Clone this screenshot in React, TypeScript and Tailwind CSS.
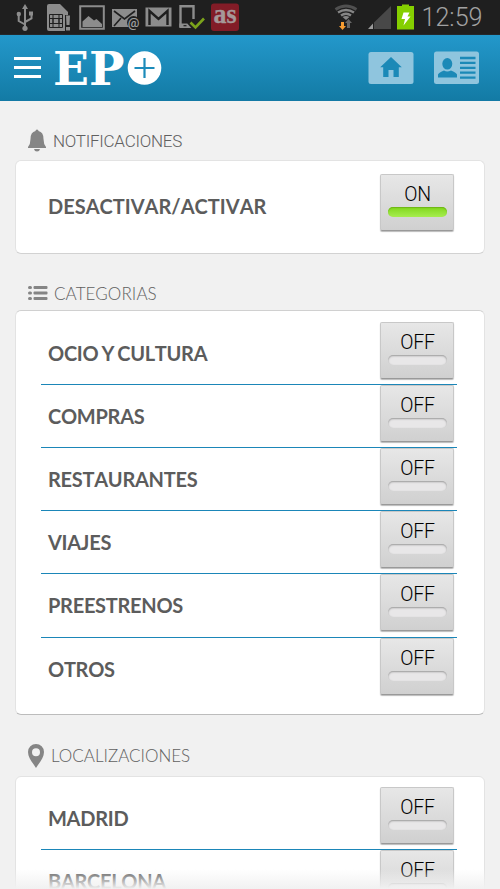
import { useState } from 'react'

const CATEGORIES = ['OCIO Y CULTURA', 'COMPRAS', 'RESTAURANTES', 'VIAJES', 'PREESTRENOS', 'OTROS']
const LOCATIONS = ['MADRID', 'BARCELONA']

function StatusBar() {
  return (
    <div className="flex h-[35px] shrink-0 items-start border-b border-[#24282b] bg-[#1f1f1f] pl-[16px] pr-[17px] text-[#8c8c8c]">
      {/* USB */}
      <svg width="18" height="34" viewBox="16 0 18 34" fill="none" stroke="currentColor" strokeWidth="2">
        <path d="M25 8v20M25 24.500l-6.300-3.500v-6M25 22l6.500-3.500v-4" />
        <path d="M25 4l3 5h-6z" fill="currentColor" stroke="none" />
        <circle cx="25" cy="28.300" r="2.600" fill="currentColor" stroke="none" />
        <circle cx="18.800" cy="14" r="2.200" fill="currentColor" stroke="none" />
        <path d="M29 11.500h4v4h-4z" fill="currentColor" stroke="none" />
      </svg>
      {/* SIM card */}
      <svg className="ml-[12px]" width="25" height="34" viewBox="46 0 25 34" fill="currentColor">
        <path d="M49 4h11l8 8v3h-3v16H49q-2 0-2-2V6q0-2 2-2z" />
        <path d="M66 15.500h4l-.500 9.500h-3zM66 27h4v3.500h-4z" />
        <path d="M49.500 14.500h13v13h-13zM53 14.500v13M59 14.500v13M49.500 18.500h3.500M49.500 23.500h3.500M59 18.500h3.500M59 23.500h3.500M53 18.500h6v5h-6z" fill="none" stroke="#1f1f1f" strokeWidth="1" />
      </svg>
      {/* Picture */}
      <svg className="ml-[8px]" width="26" height="34" viewBox="79 0 26 34">
        <path d="M80.200 6.200h23.600v22.600H80.200z" fill="none" stroke="currentColor" strokeWidth="2" />
        <path d="M82.500 27v-5.500l6-5.500 5.500 4.500 2.500-1.500 5.500 5v3z" fill="currentColor" />
      </svg>
      {/* Mail */}
      <svg className="ml-[6px]" width="29" height="34" viewBox="111 0 29 34">
        <path d="M112 9h25v18h-25z" fill="currentColor" />
        <path d="M114 11l10.500 8L135 11M114 26l7-8" fill="none" stroke="#1f1f1f" strokeWidth="1.600" />
        <circle cx="133.500" cy="22.500" r="6.500" fill="#1f1f1f" />
        <text x="133.500" y="26.500" textAnchor="middle" fontSize="13" fontWeight="500" fontFamily="Roboto, sans-serif" fill="#a0a0a0">@</text>
      </svg>
      {/* Gmail */}
      <svg className="ml-[5px]" width="27" height="34" viewBox="145 0 27 34">
        <path d="M145.500 7.500h26v19h-26z" fill="currentColor" />
        <path d="M149.500 25V11l9 8 9-8v14" fill="none" stroke="#1f1f1f" strokeWidth="2.400" />
      </svg>
      {/* Phone connected */}
      <svg className="ml-[6px]" width="27" height="34" viewBox="178 0 27 34" fill="none">
        <path d="M193.500 19V6.200h-13V27" stroke="currentColor" strokeWidth="2.400" />
        <path d="M179.300 23.500h8l4 4.500h-12z" fill="currentColor" />
        <path d="M183.500 25.700h3" stroke="#1f1f1f" strokeWidth="1.200" />
        <path d="M190.500 22.500l5 5 8.500-9" stroke="#7ba31b" strokeWidth="2.600" />
      </svg>
      <svg className="ml-[6px]" width="28" height="34" viewBox="211 0 28 34">
        <rect x="211" y="3.500" width="28" height="27.500" rx="3" fill="#821c27" />
        <text x="213.500" y="23.300" textLength="23" lengthAdjust="spacingAndGlyphs" fontSize="27" fontWeight="700" fontFamily="'Liberation Serif', serif" fill="#a59899" stroke="#a59899" strokeWidth="0.4">as</text>
      </svg>
      {/* Wifi */}
      <svg className="ml-auto" width="24" height="34" viewBox="334 0 24 34" fill="none">
        <path d="M335.500 9.500q10.500-7 21 0" stroke="#505050" strokeWidth="2.800" />
        <path d="M338 12.500q8-5 16 0M341 15.500q5-3.500 10 0" stroke="#858585" strokeWidth="2.400" />
        <path d="M342.500 17q3.500-2 7 0l-3.500 3z" fill="#858585" />
        <path d="M341 22h3v4h2l-3.500 4-3.500-4h2z" fill="#f79d31" />
        <path d="M347 28v-5h-2l3.500-4 3.500 4h-2v5z" fill="#666" />
      </svg>
      {/* Signal */}
      <svg className="ml-[9px]" width="24" height="34" viewBox="367 0 24 34">
        <path d="M374 22.500L391 6v23h-17z" fill="#484848" />
        <path d="M368 29l5-5.500V29z" fill="#9b9b9b" />
      </svg>
      {/* Battery */}
      <svg className="ml-[6px]" width="17" height="34" viewBox="397 0 17 34">
        <path d="M397 6h5V4.500h7V6h5v23.500h-17z" fill="#85cf00" />
        <path d="M403.500 12.500h6l-2 4h3l-7 9 1.500-6.500h-3.500z" fill="#fff" />
      </svg>
      <svg className="ml-[8px]" width="61" height="34" viewBox="422 0 61 34">
        <text x="421.500" y="26" textLength="61" lengthAdjust="spacingAndGlyphs" fontSize="25.500" fontWeight="300" fontFamily="Roboto, sans-serif" fill="#a2a2a2">12:59</text>
      </svg>
    </div>
  )
}

function Header() {
  return (
    <header className="flex h-[66px] shrink-0 items-center border-b border-[#1379a5] bg-linear-to-b from-[#2398cb] to-[#137ba5] pl-[14px] pr-[21px]">
      <button type="button" className="flex w-[27px] flex-col gap-[6px]">
        <span className="h-[3px] bg-white" />
        <span className="h-[3px] bg-white" />
        <span className="h-[3px] bg-white" />
      </button>
      <svg className="ml-[10px]" width="112" height="58" viewBox="51 39 112 58">
        <text x="53" y="84.500" textLength="71.500" lengthAdjust="spacingAndGlyphs" fontSize="46" fontWeight="700" fontFamily="'DejaVu Serif', serif" fill="#fff">EP</text>
        <circle cx="144.500" cy="68" r="16.800" fill="#fff" />
        <path d="M134.500 68h20M144.500 58v20" stroke="#1c8bba" strokeWidth="2.200" />
      </svg>
      <button type="button" className="ml-auto">
        <svg width="46" height="34" viewBox="368 51 46 34">
          <rect x="368.500" y="52" width="45" height="32" rx="2.500" fill="#8fc5de" />
          <path d="M391 57l-10.800 10.200h3V77h5.300v-7h5v7h5.300v-9.800h3z" fill="#1b89b7" />
        </svg>
      </button>
      <button type="button" className="ml-[20px]">
        <svg width="45" height="34" viewBox="434 51 45 34">
          <rect x="434" y="51.500" width="45" height="32.500" rx="2.500" fill="#8fc5de" />
          <ellipse cx="447.300" cy="63.800" rx="5" ry="5.800" fill="#1b89b7" />
          <path d="M438 77.500v-3q1-2 6-4q3 2 7 0q5 2 6 4v3z" fill="#1b89b7" />
          <path d="M460 58h15.500M460 62.900h15.500M460 67.800h15.500M460 72.700h15.500M460 77.600h15.500" stroke="#1b89b7" strokeWidth="2.300" />
        </svg>
      </button>
    </header>
  )
}

function Toggle({ initial = false }: { initial?: boolean }) {
  const [on, setOn] = useState(initial)

  return (
    <button
      type="button"
      onClick={() => setOn(!on)}
      className="flex h-[57px] w-[74px] shrink-0 flex-col items-center rounded-[2px] border border-[#c8c8c8] border-b-[#999] bg-linear-to-b from-[#e7e7e7] to-[#d0d0d0] pt-[8px] shadow-[0_1px_1px_#bbb]"
    >
      <span className="pl-px font-[Roboto,sans-serif] text-[19.500px] leading-[23px] font-light tracking-[-0.2px] text-black">{on ? 'ON' : 'OFF'}</span>
      <span
        className={`mt-px h-[10px] w-[59px] rounded-full ${
          on
            ? 'bg-linear-to-b from-[#80d713] to-[#a6ed4d] shadow-[inset_0_1px_1px_#6eb517]'
            : 'bg-[#e8e7e8] shadow-[inset_0_1px_2px_#999]'
        }`}
      />
    </button>
  )
}

function OptionList({ items }: { items: string[] }) {
  return (
    <ul className="ml-[25px] w-[416px]">
      {items.map((item, i) => (
        <li
          key={item}
          className={`flex h-[63.200px] items-start justify-between border-[#1b86b8] pl-[7px] pr-[3px] ${
            i < items.length - 1 ? 'border-b' : ''
          }`}
        >
          <span className="mt-[16px] text-[20px] leading-[30px] font-bold tracking-[-0.28px] text-[#5c5c5c] [font-kerning:none] [word-spacing:-1.500px]">
            {item}
          </span>
          <Toggle />
        </li>
      ))}
    </ul>
  )
}

export default function App() {
  return (
    <div className="relative flex h-[889px] w-[500px] flex-col overflow-hidden bg-[#f1f1f1] font-[Lato,sans-serif]">
      <StatusBar />
      <Header />

      <main className="min-h-0 flex-1 overflow-hidden px-[15px]">
        <h2 className="flex h-[59px] items-start pl-[12px] pt-[28px] font-[Roboto,sans-serif] text-[17px] leading-[24px] font-light tracking-[-0.26px] text-[#606060]">
          <svg className="mr-[6px]" width="20" height="23" viewBox="27 129 20 23" fill="#858585">
            <path d="M35.500 131q0-1.500 1.500-1.500t1.500 1.500q5 1 5 8 0 5 2.500 8v1h-18v-1q2.500-3 2.500-8 0-7 5-8zM34 149h6q-.500 2.500-3 2.500t-3-2.500z" />
          </svg>
          <span>NOTIFICACIONES</span>
        </h2>
        <section className="flex h-[94px] items-start justify-between rounded-[6px] border border-[#e3e3e3] border-b-[#d2d2d2] bg-white pl-[32px] pr-[30px] pt-[13px]">
          <span className="mt-[17px] text-[20px] leading-[30px] font-bold text-[#5c5c5c] [font-kerning:none]">
            DESACTIVAR/ACTIVAR
          </span>
          <Toggle initial />
        </section>

        <h2 className="flex h-[56px] items-start pl-[12px] pt-[28px] text-[17px] leading-[24px] font-light text-[#606060]">
          <svg className="mr-[6px] mt-[3px]" width="21" height="15" viewBox="27 285 21 15" fill="#858585">
            <rect x="28" y="286" width="4" height="3" rx="1.500" />
            <rect x="28" y="291.500" width="4" height="3" rx="1.500" />
            <rect x="28" y="297" width="4" height="3" rx="1.500" />
            <rect x="33.500" y="286" width="14" height="3" rx="1" />
            <rect x="33.500" y="291.500" width="14" height="3" rx="1" />
            <rect x="33.500" y="297" width="14" height="3" rx="1" />
          </svg>
          <span className="tracking-[0.1px]">CATEGORIAS</span>
        </h2>
        <section className="h-[405px] rounded-[6px] border border-[#e3e3e3] border-t-[#d0d0d0] border-b-[#bcbcbc] bg-white pt-[10.600px]">
          <OptionList items={CATEGORIES} />
        </section>

        <h2 className="flex h-[61px] items-start pl-[12px] pt-[29px] text-[17px] leading-[24px] font-light text-[#606060]">
          <svg className="mr-[7px]" width="17" height="25" viewBox="27 744 17 25" fill="#858585">
            <path fillRule="evenodd" d="M36 744a8 8 0 0 1 8 8c0 6-5 11-8 16-3-5-8-10-8-16a8 8 0 0 1 8-8zm0 4.300a4 4 0 1 0 0 8 4 4 0 0 0 0-8z" />
          </svg>
          <span>LOCALIZACIONES</span>
        </h2>
        <section className="h-[160px] rounded-[6px] border border-[#e3e3e3] bg-white pt-[10px]">
          <OptionList items={LOCATIONS} />
        </section>
      </main>

      {/* Fade at the end of the scroll area */}
      <div className="pointer-events-none absolute inset-x-0 bottom-0 h-[20px] bg-linear-to-b from-[#f1f1f1]/0 to-[#f1f1f1]" />
    </div>
  )
}
